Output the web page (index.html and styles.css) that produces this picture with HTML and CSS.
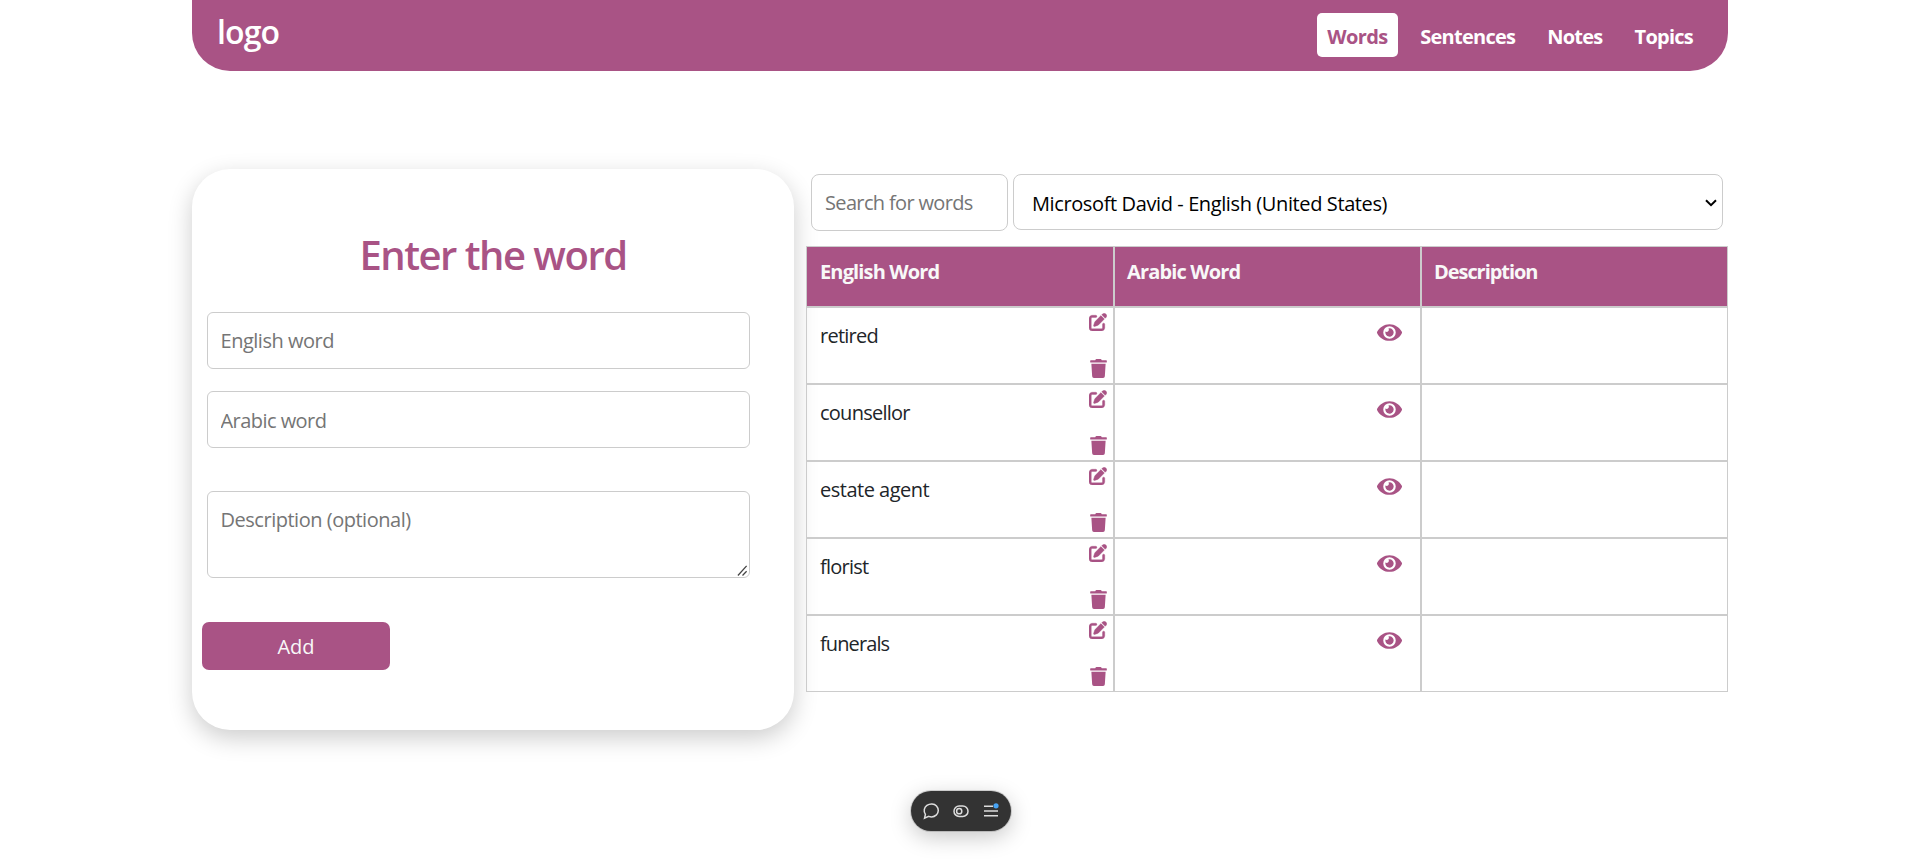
FILE: index.html
```html
<!DOCTYPE html>
<html lang="en">
<head>
<meta charset="utf-8">
<title>Words</title>
<link rel="stylesheet" href="styles.css">
</head>
<body>
<svg class="sprite" aria-hidden="true">
  <symbol id="edit" viewBox="0 0 512 512"><path d="M471.6 21.7c-21.900-21.900-57.300-21.900-79.200 0L362.300 51.700l97.900 97.900 30.100-30.100c21.900-21.900 21.900-57.300 0-79.200L471.600 21.700zm-299.200 220c-6.100 6.100-10.800 13.600-13.500 21.900l-29.600 88.800c-2.900 8.600-.6 18.100 5.800 24.600s15.900 8.700 24.600 5.800l88.800-29.600c8.200-2.700 15.700-7.400 21.900-13.500L437.700 172.300 339.700 74.300 172.400 241.700zM96 64C43 64 0 107 0 160V416c0 53 43 96 96 96H352c53 0 96-43 96-96V320c0-17.700-14.300-32-32-32s-32 14.300-32 32v96c0 17.700-14.300 32-32 32H96c-17.700 0-32-14.300-32-32V160c0-17.700 14.300-32 32-32h96c17.700 0 32-14.300 32-32s-14.300-32-32-32H96z"/></symbol>
  <symbol id="trash" viewBox="0 0 448 512"><path d="M432 32H312l-9.400-18.700A24 24 0 0 0 281.100 0H166.800a23.720 23.720 0 0 0-21.400 13.300L136 32H16A16 16 0 0 0 0 48v32a16 16 0 0 0 16 16h416a16 16 0 0 0 16-16V48a16 16 0 0 0-16-16zM53.200 467a48 48 0 0 0 47.900 45h245.800a48 48 0 0 0 47.900-45L416 128H32z"/></symbol>
  <symbol id="eye" viewBox="0 0 576 512"><path d="M572.520 241.400C518.290 135.590 410.930 64 288 64S57.680 135.640 3.480 241.410a32.350 32.350 0 0 0 0 29.190C57.710 376.410 165.070 448 288 448s230.320-71.640 284.520-177.410a32.350 32.350 0 0 0 0-29.190zM288 400a144 144 0 1 1 144-144 143.930 143.930 0 0 1-144 144zm0-240a95.310 95.310 0 0 0-25.310 3.790 47.850 47.850 0 0 1-66.900 66.900A95.780 95.780 0 1 0 288 160z"/></symbol>
</svg>

<header class="navbar">
  <a class="logo">logo</a>
  <nav class="links">
    <a class="link active">Words</a>
    <a class="link">Sentences</a>
    <a class="link">Notes</a>
    <a class="link">Topics</a>
  </nav>
</header>

<main class="content">
  <form class="card">
    <h1 class="title">Enter the word</h1>
    <input class="field" type="text" placeholder="English word">
    <input class="field arabic" type="text" placeholder="Arabic word">
    <div class="description-box">
      <textarea class="field description" placeholder="Description (optional)"></textarea>
      <svg class="grip" viewBox="0 0 12 12"><path d="M1 11.500 10.500 1M6 11.500 10.500 6.800"/></svg>
    </div>
    <button class="add" type="button">Add</button>
  </form>

  <section class="list">
    <div class="toolbar">
      <input class="search" type="text" placeholder="Search for words">
      <div class="voice-box">
        <select class="voice"><option>Microsoft David - English (United States)</option></select>
        <svg class="chevron" viewBox="0 0 12 8"><path d="M1 1.300 6 6.200 11 1.300"/></svg>
      </div>
    </div>
    <table class="words">
      <colgroup><col class="first"><col><col></colgroup>
      <thead><tr><th>English Word</th><th>Arabic Word</th><th class="tight">Description</th></tr></thead>
      <tbody>
        <tr><td><div class="cell"><span>retired</span><div class="actions"><svg class="edit"><use href="#edit"/></svg><svg class="trash"><use href="#trash"/></svg></div></div></td><td><div class="cell reveal"><svg class="eye"><use href="#eye"/></svg></div></td><td></td></tr>
        <tr><td><div class="cell"><span>counsellor</span><div class="actions"><svg class="edit"><use href="#edit"/></svg><svg class="trash"><use href="#trash"/></svg></div></div></td><td><div class="cell reveal"><svg class="eye"><use href="#eye"/></svg></div></td><td></td></tr>
        <tr><td><div class="cell"><span class="wide">estate agent</span><div class="actions"><svg class="edit"><use href="#edit"/></svg><svg class="trash"><use href="#trash"/></svg></div></div></td><td><div class="cell reveal"><svg class="eye"><use href="#eye"/></svg></div></td><td></td></tr>
        <tr><td><div class="cell"><span>florist</span><div class="actions"><svg class="edit"><use href="#edit"/></svg><svg class="trash"><use href="#trash"/></svg></div></div></td><td><div class="cell reveal"><svg class="eye"><use href="#eye"/></svg></div></td><td></td></tr>
        <tr><td><div class="cell"><span class="tight">funerals</span><div class="actions"><svg class="edit"><use href="#edit"/></svg><svg class="trash"><use href="#trash"/></svg></div></div></td><td><div class="cell reveal"><svg class="eye"><use href="#eye"/></svg></div></td><td></td></tr>
      </tbody>
    </table>
  </section>
</main>

<div class="dock">
  <svg class="dock-icon" viewBox="0 0 16 16"><path d="M1.500 15.300 2.400 11.400C.2 8 1.200 4.300 3.900 2.400 6.900.3 11.200.4 13.500 2.900c2.500 2.700 2.300 6.600-.1 9-2.200 2.100-5.200 2.400-7.700 1.500z"/></svg>
  <svg class="dock-icon" viewBox="0 0 16 16"><rect x="1" y="3" width="14" height="10.400" rx="5.200"/><circle cx="6.200" cy="8.200" r="2.600"/></svg>
  <svg class="dock-icon" viewBox="0 0 16 16"><path d="M1 3.200h9M1 8h14M1 12.800h14"/><circle class="dot" cx="13" cy="2.800" r="2.600"/></svg>
</div>
</body>
</html>
```
FILE: styles.css
```css
* { box-sizing: border-box; }

body {
  margin: 0;
  height: 868px;
  overflow: hidden;
  background: #fff;
  color: #212529;
  font: 20px/30px "Open Sans", sans-serif;
}

.sprite { display: none; }
svg { display: block; }

.navbar {
  display: flex;
  justify-content: space-between;
  width: 1536px;
  height: 71px;
  margin: 0 auto;
  padding: 0 25px;
  background: #a95385;
  border-radius: 0 0 38px 38px;
  color: #fff;
}

.logo {
  padding-top: 8px;
  font-size: 32px;
  font-weight: 600;
  line-height: 48px;
  letter-spacing: -0.9px;
}

.links {
  display: flex;
  gap: 12px;
  padding-top: 13px;
}

.link {
  height: 44px;
  padding: 9px 10px 7px;
  border-radius: 5px;
  font-weight: 700;
  letter-spacing: -0.75px;
}

.link.active {
  width: 81px;
  background: #fff;
  color: #a95385;
  letter-spacing: -0.6px;
}

.content {
  display: flex;
  gap: 12px;
  width: 1536px;
  margin: 98px auto 0;
  align-items: flex-start;
}

.card {
  display: flex;
  flex-direction: column;
  align-items: flex-start;
  width: 602px;
  height: 561px;
  padding: 56px 10px 0;
  border-radius: 38px;
  background: #fff;
  box-shadow: 0 8px 24px rgba(0, 0, 0, 0.2);
}

.title {
  width: 100%;
  margin: 0 0 27px;
  color: #a95385;
  font-size: 40px;
  font-weight: 600;
  line-height: 60px;
  letter-spacing: -1.5px;
  text-align: center;
}

.field,
.search,
.voice {
  border: 1px solid #ccc;
  background: #fff;
  font: inherit;
  outline: none;
}

.field {
  width: 543px;
  height: 57px;
  margin: 0 0 22px 5px;
  padding: 0 12.500px;
  border-radius: 6px;
  letter-spacing: -0.48px;
}

.arabic { padding-top: 1px; letter-spacing: -0.55px; }

.field::placeholder,
.search::placeholder { color: #757575; }

.description-box {
  position: relative;
  margin: 21px 0 44px 5px;
}

.description {
  display: block;
  height: 87px;
  margin: 0;
  padding-top: 13px;
  resize: none;
}

.grip {
  position: absolute;
  right: 2px;
  bottom: 2px;
  width: 11px;
  height: 11px;
  fill: none;
  stroke: #444;
  stroke-width: 1.4;
}

.add {
  width: 188px;
  height: 48px;
  padding: 2px 0 0;
  border: 0;
  border-radius: 7px;
  background: #a95385;
  color: #f8f8f8;
  font: inherit;
}

.list { width: 922px; }

.toolbar {
  display: flex;
  gap: 5px;
  padding: 5px 5px 15px;
}

.search {
  width: 197px;
  height: 57px;
  padding: 0 13px;
  border-radius: 8px;
  letter-spacing: -0.65px;
}

.voice-box { position: relative; }

.voice {
  width: 710px;
  height: 56px;
  padding: 3px 0 0 18px;
  border-radius: 8px;
  color: #000;
  letter-spacing: -0.39px;
  appearance: none;
}

.chevron {
  position: absolute;
  right: 6px;
  top: 25px;
  width: 12px;
  height: 8px;
  fill: none;
  stroke: #000;
  stroke-width: 2;
}

.words {
  width: 922px;
  table-layout: fixed;
  border-spacing: 0;
}

.first { width: 308px; }

.words th,
.words td {
  border: 1px solid #ccc;
  vertical-align: top;
}

.words th {
  height: 61px;
  padding: 10px 12px 0 13px;
  background: #a95385;
  color: #f8f8f8;
  font-weight: 700;
  letter-spacing: -0.86px;
  text-align: left;
}

.words th + th { padding-left: 12px; }
.words th.tight { letter-spacing: -1.06px; }

.words td {
  height: 77px;
  padding: 0;
  letter-spacing: -0.75px;
}

.words .wide { letter-spacing: -0.5px; }
.words td .tight { letter-spacing: -0.9px; }

.cell {
  display: flex;
  justify-content: space-between;
  height: 75px;
  padding: 13px 6px 0 13px;
  fill: #a95385;
}

.actions {
  display: flex;
  flex-direction: column;
  justify-content: space-between;
  align-items: flex-end;
  margin-top: -8px;
  padding-bottom: 5px;
}

.edit {
  width: 18px;
  height: 18px;
  overflow: visible;
  stroke: #a95385;
  stroke-width: 10;
}

.trash { width: 17px; height: 19px; }

.reveal { justify-content: flex-end; padding: 13px 18px 0; }
.eye { width: 25px; height: 23px; }

.dock {
  position: absolute;
  left: 910.5px;
  top: 791px;
  display: flex;
  align-items: center;
  justify-content: center;
  gap: 14px;
  width: 100px;
  height: 40px;
  border-radius: 20px;
  background: #333;
  box-shadow: 0 0 0 1px rgba(0, 0, 0, 0.15), 0 6px 22px rgba(0, 0, 0, 0.22);
}

.dock-icon {
  width: 16px;
  height: 16px;
  overflow: visible;
  fill: none;
  stroke: #ddd;
  stroke-width: 1.5;
}

.dot { fill: #47a3f3; stroke: none; }
```
